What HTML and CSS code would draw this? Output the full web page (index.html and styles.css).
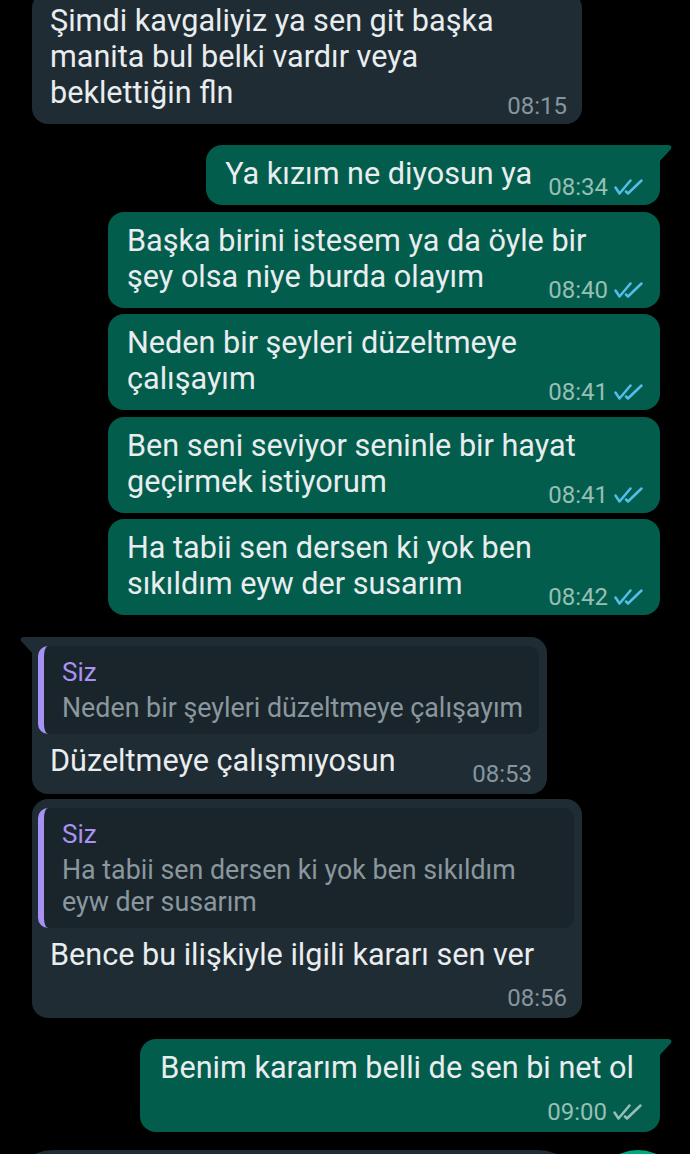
FILE: index.html
```html
<!DOCTYPE html>
<html lang="tr">
<head>
<meta charset="utf-8">
<title>Sohbet</title>
<link rel="stylesheet" href="styles.css">
</head>
<body>
<main class="chat">
  <div class="row in first">
    <div class="bubble in full">
      <p class="text">Şimdi kavgaliyiz ya sen git başka<br>manita bul belki vardır veya<br>beklettiğin fln<span class="meta"><span class="time">08:15</span></span></p>
    </div>
  </div>

  <div class="row out gap-lg">
    <div class="bubble out tail-out">
      <p class="text">Ya kızım ne diyosun ya<span class="meta"><span class="time">08:34</span><svg class="ticks read" viewBox="0 0 29 16"><path d="M1.5 8.5 L5.5 14.5 L16.5 1.5"/><path d="M12 12.5 L14 14.5 L27.5 1.5"/></svg></span></p>
    </div>
  </div>

  <div class="row out gap-sm">
    <div class="bubble out full">
      <p class="text">Başka birini istesem ya da öyle bir<br>şey olsa niye burda olayım<span class="meta"><span class="time">08:40</span><svg class="ticks read" viewBox="0 0 29 16"><path d="M1.5 8.5 L5.5 14.5 L16.5 1.5"/><path d="M12 12.5 L14 14.5 L27.5 1.5"/></svg></span></p>
    </div>
  </div>

  <div class="row out gap-sm">
    <div class="bubble out full">
      <p class="text">Neden bir şeyleri düzeltmeye<br>çalışayım<span class="meta"><span class="time">08:41</span><svg class="ticks read" viewBox="0 0 29 16"><path d="M1.5 8.5 L5.5 14.5 L16.5 1.5"/><path d="M12 12.5 L14 14.5 L27.5 1.5"/></svg></span></p>
    </div>
  </div>

  <div class="row out gap-sm">
    <div class="bubble out full">
      <p class="text">Ben seni seviyor seninle bir hayat<br>geçirmek istiyorum<span class="meta"><span class="time">08:41</span><svg class="ticks read" viewBox="0 0 29 16"><path d="M1.5 8.5 L5.5 14.5 L16.5 1.5"/><path d="M12 12.5 L14 14.5 L27.5 1.5"/></svg></span></p>
    </div>
  </div>

  <div class="row out gap-sm">
    <div class="bubble out full">
      <p class="text">Ha tabii sen dersen ki yok ben<br>sıkıldım eyw der susarım<span class="meta"><span class="time">08:42</span><svg class="ticks read" viewBox="0 0 29 16"><path d="M1.5 8.5 L5.5 14.5 L16.5 1.5"/><path d="M12 12.5 L14 14.5 L27.5 1.5"/></svg></span></p>
    </div>
  </div>

  <div class="row in gap-q">
    <div class="bubble in quoted tail-in">
      <div class="quote">
        <div class="quote-author">Siz</div>
        <div class="quote-text">Neden bir şeyleri düzeltmeye çalışayım</div>
      </div>
      <p class="text">Düzeltmeye çalışmıyosun<span class="meta"><span class="time">08:53</span></span></p>
    </div>
  </div>

  <div class="row in gap-xs">
    <div class="bubble in quoted full">
      <div class="quote">
        <div class="quote-author">Siz</div>
        <div class="quote-text">Ha tabii sen dersen ki yok ben sıkıldım<br>eyw der susarım</div>
      </div>
      <div class="stack">
        <p class="text">Bence bu ilişkiyle ilgili kararı sen ver</p>
        <div class="meta"><span class="time">08:56</span></div>
      </div>
    </div>
  </div>

  <div class="row out gap-lg">
    <div class="bubble out tail-out stacked">
      <div class="stack">
        <p class="text">Benim kararım belli de sen bi net ol</p>
        <div class="meta"><span class="time">09:00</span><svg class="ticks sent" viewBox="0 0 29 16"><path d="M1.5 8.5 L5.5 14.5 L16.5 1.5"/><path d="M12 12.5 L14 14.5 L27.5 1.5"/></svg></div>
      </div>
    </div>
  </div>
</main>
<footer class="composer">
  <div class="input"></div>
  <div class="mic"></div>
</footer>
</body>
</html>
```

FILE: styles.css
```css
* { box-sizing: border-box; }
html, body {
  margin: 0;
  background: #000;
}
body {
  width: 690px;
  height: 1154px;
  overflow: hidden;
  font-family: Roboto, "Noto Sans", sans-serif;
  color: #e9edef;
}
.chat {
  display: flex;
  flex-direction: column;
  padding: 0 30px 0 32px;
}
.row { display: flex; }
.row.out { justify-content: flex-end; }
.row.first { margin-top: -8px; }
.gap-lg { margin-top: 21px; }
.gap-q { margin-top: 22px; }
.gap-sm { margin-top: 6.5px; }
.gap-xs { margin-top: 5px; }

.bubble {
  position: relative;
  border-radius: 16px;
  padding: 11px 17px 6px 19px;
}
.bubble.in {
  background: #1f2c33;
  padding: 11px 15px 6px 18px;
}
.bubble.out { background: #035d4c; }
.bubble.out.full { width: 552px; }
.bubble.in.full { width: 550px; }
.bubble.stacked { padding: 11px 26px 8px 20px; }
.bubble.stacked .meta { margin-right: -8px; }

/* message text with the time floated into its last line */
.text {
  display: flow-root;
  margin: 0;
  font-size: 30.6px;
  line-height: 36px;
  white-space: nowrap;
}
.meta {
  float: right;
  margin: 19px 0 0 16px;
  height: 24px;
  display: flex;
  align-items: center;
  gap: 6px;
  font-size: 24px;
  line-height: 24px;
  white-space: nowrap;
}
.in .meta { color: #8696a0; }
.out .meta { color: #97bfb6; }
.ticks {
  width: 29px;
  height: 16px;
  fill: none;
  stroke-width: 2.5;
  stroke-linecap: round;
  stroke-linejoin: round;
}
.ticks.read { stroke: #53bdeb; }
.ticks.sent { stroke: #97bfb6; }

/* time on its own row under the text */
.stack {
  display: flex;
  flex-direction: column;
}
.stack .meta {
  float: none;
  align-self: flex-end;
  margin: 14px 0 0;
}

/* quoted replies */
.bubble.quoted {
  padding: 9px 8px 8px 6px;
}
.quoted > .text,
.quoted > .stack {
  margin: 9px 0 0;
  padding: 0 7px 0 12px;
}
.quoted .stack .meta { margin-top: 13px; }
.quote {
  background: #1a252b;
  border-left: 6px solid #a791f5;
  border-radius: 10px;
  padding: 10px 16px 10px 18px;
}
.quote-author {
  color: #a892f4;
  font-size: 26px;
  line-height: 32px;
  margin-bottom: 4px;
}
.quote-text {
  color: #8a979e;
  font-size: 26.8px;
  line-height: 32px;
  white-space: nowrap;
}

/* tails */
.tail-out { border-top-right-radius: 0; }
.tail-out::before {
  content: "";
  position: absolute;
  top: 0;
  right: -12px;
  width: 14px;
  height: 18px;
  background: inherit;
  clip-path: polygon(0 0, 11px 0, 13.5px 1.5px, 13px 4px, 0 18px);
}
.tail-in { border-top-left-radius: 0; }
.tail-in::before {
  content: "";
  position: absolute;
  top: 0;
  left: -12px;
  width: 14px;
  height: 18px;
  background: inherit;
  clip-path: polygon(1px 4px, 0.5px 1.5px, 3px 0, 14px 0, 14px 18px);
}

/* composer */
.composer {
  display: flex;
  gap: 14px;
  margin-top: 18px;
  padding: 0 9px 0 10px;
}
.input {
  flex: 1;
  height: 86px;
  border-radius: 43px;
  background: #1f2c33;
}
.mic {
  flex: none;
  width: 86px;
  height: 86px;
  border-radius: 50%;
  background: #00a884;
}
```
